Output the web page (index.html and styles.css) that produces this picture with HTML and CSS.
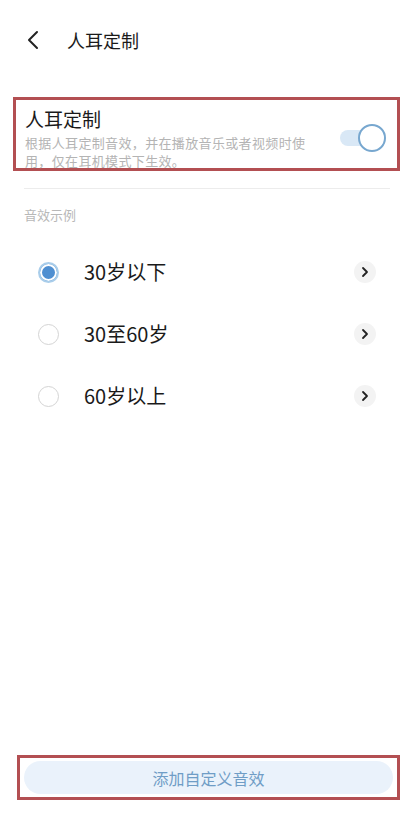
FILE: index.html
```html
<!DOCTYPE html>
<html lang="zh">
<head>
<meta charset="utf-8">
<link rel="stylesheet" href="styles.css">
</head>
<body>
<div class="page">
  <header class="topbar">
    <svg class="back" width="14" height="20" viewBox="0 0 14 20"><path d="M11 2 L3 10 L11 18" fill="none" stroke="#222" stroke-width="2" stroke-linecap="round" stroke-linejoin="round"/></svg>
    <span class="title">人耳定制</span>
  </header>

  <section class="feature">
    <div class="feature-text">
      <div class="feature-title">人耳定制</div>
      <div class="feature-desc">根据人耳定制音效，并在播放音乐或者视频时使用，仅在耳机模式下生效。</div>
    </div>
    <div class="toggle"><span class="knob"></span></div>
  </section>

  <div class="divider"></div>

  <div class="section-label">音效示例</div>

  <ul class="options">
    <li class="option"><span class="radio on"></span><span class="opt-label">30岁以下</span><span class="chev"><svg width="10" height="12" viewBox="0 0 10 12"><path d="M3 2 L7 6 L3 10" fill="none" stroke="#222" stroke-width="1.8" stroke-linecap="round" stroke-linejoin="round"/></svg></span></li>
    <li class="option"><span class="radio"></span><span class="opt-label">30至60岁</span><span class="chev"><svg width="10" height="12" viewBox="0 0 10 12"><path d="M3 2 L7 6 L3 10" fill="none" stroke="#222" stroke-width="1.8" stroke-linecap="round" stroke-linejoin="round"/></svg></span></li>
    <li class="option"><span class="radio"></span><span class="opt-label">60岁以上</span><span class="chev"><svg width="10" height="12" viewBox="0 0 10 12"><path d="M3 2 L7 6 L3 10" fill="none" stroke="#222" stroke-width="1.8" stroke-linecap="round" stroke-linejoin="round"/></svg></span></li>
  </ul>

  <div class="spacer"></div>

  <div class="bottom">
    <button class="add-btn">添加自定义音效</button>
  </div>
</div>
</body>
</html>
```

FILE: styles.css
```css
* { box-sizing: border-box; }
html, body { margin: 0; padding: 0; background: #fff; }
body {
  font-family: "Noto Sans CJK SC", "Noto Sans", sans-serif;
  color: #222;
}
.page {
  width: 413px;
  height: 819px;
  display: flex;
  flex-direction: column;
  overflow: hidden;
}
.topbar {
  height: 80px;
  display: flex;
  align-items: center;
  padding: 0 0 0 26px;
  gap: 27px;
}
.back { display: block; }
.title {
  font-size: 18px;
  line-height: 24px;
  color: #1a1a1a;
}
.feature {
  margin: 17px 13px 0 13px;
  height: 74px;
  border: 3px solid #b34f52;
  display: flex;
  align-items: flex-start;
  padding: 7px 11px 0 9px;
  gap: 10px;
}
.feature-text { flex: 1; }
.feature-title {
  font-size: 19px;
  line-height: 24px;
  color: #1a1a1a;
}
.feature-desc {
  margin-top: 3px;
  font-size: 13px;
  line-height: 18px;
  letter-spacing: 0.35px;
  color: #b4b4b4;
  width: 300px;
}
.toggle {
  position: relative;
  width: 46px;
  height: 28px;
  margin-top: 17px;
  display: flex;
  align-items: center;
}
.toggle::before {
  content: "";
  width: 36px;
  height: 16px;
  border-radius: 8px;
  background: #d9e8f6;
}
.knob {
  position: absolute;
  right: 0;
  top: 0;
  width: 28px;
  height: 28px;
  border-radius: 50%;
  background: #fff;
  border: 2.5px solid #77a7cf;
}
.divider {
  margin: 17px 23px 0 24px;
  height: 1px;
  background: #ececec;
}
.section-label {
  margin: 17px 0 0 24px;
  font-size: 13px;
  line-height: 18px;
  color: #b8b8b8;
}
.options {
  list-style: none;
  margin: 17px 0 0 0;
  padding: 0;
}
.option {
  height: 62px;
  display: flex;
  align-items: center;
  padding: 0 37px 0 38px;
}
.radio {
  width: 21px;
  height: 21px;
  border-radius: 50%;
  border: 1.5px solid #d4d4d4;
  background: #fff;
  flex: none;
}
.radio.on {
  border: 2px solid #a9cdea;
  background: #4f8fd1;
  box-shadow: inset 0 0 0 2px #fff;
}
.opt-label {
  margin-left: 25px;
  flex: 1;
  font-size: 20px;
  line-height: 26px;
  color: #1a1a1a;
}
.chev {
  width: 22px;
  height: 22px;
  border-radius: 50%;
  background: #f3f3f3;
  display: flex;
  align-items: center;
  justify-content: center;
}
.chev svg { display: block; }
.spacer { flex: 1; }
.bottom {
  margin: 0 13px 19px 17px;
  height: 45px;
  border: 3px solid #b34f52;
  padding: 3px 4px;
  display: flex;
}
.add-btn {
  flex: 1;
  border: none;
  border-radius: 18px;
  background: #eaf2fb;
  color: #6f9dc6;
  font-family: "Noto Sans CJK SC", "Noto Sans", sans-serif;
  font-size: 16px;
  line-height: 22px;
  padding: 0;
}
```
